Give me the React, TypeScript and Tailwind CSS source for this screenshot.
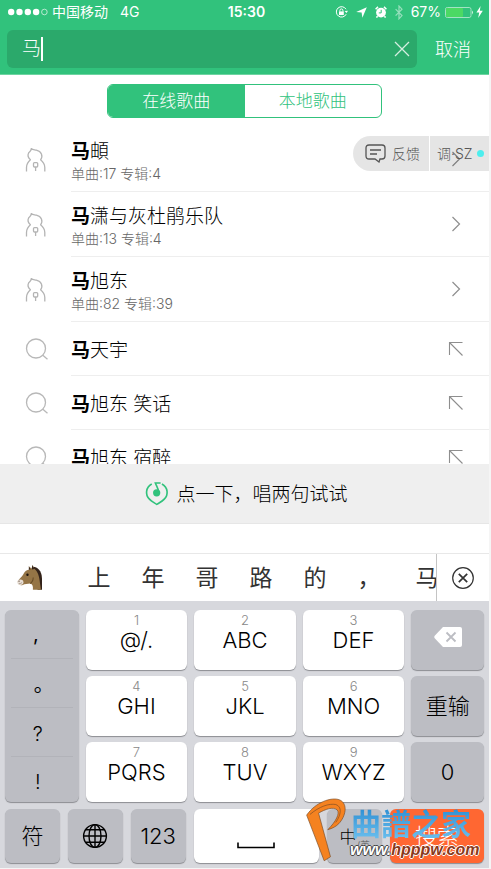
import React from "react";

const artists = [
  { rest: "頔", songs: 17, albums: 4 },
  { rest: "潇与灰杜鹃乐队", songs: 13, albums: 4 },
  { rest: "旭东", songs: 82, albums: 39 },
];

const suggestions = ["天宇", "旭东 笑话", "旭东 宿醉"];

const candidates = ["上", "年", "哥", "路", "的", "，", "马"];

const whiteKey =
  "flex flex-col items-center rounded-md bg-white pt-1 text-black shadow-[0_1px_1px_#8c8d92]";
const greyKey =
  "flex items-center justify-center rounded-md bg-[#bcbdc3] text-[22px] text-black shadow-[0_1px_1px_#8c8d92]";

function PersonIcon() {
  return (
    <svg width="22" height="26" viewBox="0 0 22 26" fill="none" stroke="#b4b4b4" strokeWidth="1.3" strokeLinejoin="round">
      <path d="M1.5 24.5V20.5C1.5 17.2 3 15 5.4 12.8C3.2 10.8 2.4 8.4 3.6 6C4.8 4.4 6.4 4 6.2 1.6C7.8 3 9.4 2.7 11.4 3.2C16.4 4.4 18.4 9 15.6 12.8C18.2 15 19.8 17.2 19.8 20.5V24.5" />
      <rect x="8.5" y="15.6" width="4.2" height="4.4" rx="1" />
      <path d="M10.6 20V24" />
    </svg>
  );
}

function SearchIcon() {
  return (
    <svg width="24" height="24" viewBox="0 0 24 24" fill="none" stroke="#b8b8b8" strokeWidth="1.3">
      <circle cx="11" cy="11.5" r="9.5" />
      <path d="M17.8 18.3L22.5 22.3" />
    </svg>
  );
}

function Chevron() {
  return (
    <svg width="10" height="16" viewBox="0 0 10 16" fill="none" stroke="#8e8e8e" strokeWidth="1.2">
      <path d="M1.5 1L8.5 8L1.5 15" />
    </svg>
  );
}

function FillArrow() {
  return (
    <svg width="16" height="16" viewBox="0 0 16 16" fill="none" stroke="#8e8e8e" strokeWidth="1.1">
      <path d="M1.5 14V1.5H14.5M1.5 1.5L14.5 14.5" />
    </svg>
  );
}

function StatusBar() {
  return (
    <div className="grid h-6 grid-cols-[1fr_auto_1fr] items-center px-2 text-[14px] leading-5">
      <div className="flex items-center">
        <svg width="40" height="8" viewBox="0 0 40 8" fill="#fff">
          <circle cx="3.2" cy="4" r="3.2" />
          <circle cx="11.5" cy="4" r="3.2" />
          <circle cx="19.8" cy="4" r="3.2" />
          <circle cx="28.1" cy="4" r="3.2" />
          <circle cx="36.4" cy="4" r="2.8" fill="none" stroke="#d5f3e4" strokeWidth=".8" />
        </svg>
        <span className="ml-1">中国移动</span>
        <span className="ml-3">4G</span>
      </div>
      <span className="pl-1 font-semibold">15:30</span>
      <div className="flex items-center justify-end">
        <svg width="13" height="12" viewBox="0 0 13 12" fill="none" stroke="#fff" strokeWidth="1">
          <path d="M11 3.2A5.2 5.2 0 1 0 11.2 8.2" />
          <path d="M9.6 5L11.5 7L13 4.8Z" fill="#fff" stroke="none" />
          <rect x="4" y="5.4" width="4.8" height="3.6" fill="#fff" stroke="none" />
          <path d="M4.9 5.5V4.4A1.5 1.5 0 0 1 7.9 4.4V5.5" />
        </svg>
        <svg className="ml-2" width="11" height="11" viewBox="0 0 11 11" fill="#fff">
          <path d="M10.8 .2L6.4 10.8L5.6 5.6L.2 5Z" />
        </svg>
        <svg className="ml-2" width="12" height="12" viewBox="0 0 12 12">
          <circle cx="6" cy="6.6" r="4.9" fill="#fff" />
          <path d="M.6 3.2L3 .9M11.4 3.2L9 .9M2.6 10.2L1.4 11.6M9.4 10.2L10.6 11.6" stroke="#fff" strokeWidth="1.5" />
          <path d="M6.2 3.8V6.9H3.8" stroke="#31c27c" fill="none" />
        </svg>
        <svg className="ml-2" width="8" height="15" viewBox="0 0 8 15" fill="none" stroke="#96dfbc" strokeWidth="1.2">
          <path d="M.6 4.2L7 10.6L4 13.8V1L7 4.2L.6 10.6" />
        </svg>
        <span className="ml-2">67%</span>
        <svg className="ml-1" width="29" height="11" viewBox="0 0 29 11">
          <rect x=".5" y=".5" width="25.5" height="10" rx="1.8" fill="none" stroke="#a2e3c4" />
          <rect x="1" y="1" width="17" height="9" rx="1" fill="#4bd964" />
          <path d="M27 3.6Q29 5.5 27 7.4Z" fill="#d5f3e4" />
        </svg>
        <svg className="-mr-0.5 ml-0.5" width="7" height="12" viewBox="0 0 7 12" fill="#fff">
          <path d="M4.6 0L.4 6.6H3.2L2.2 12L6.8 4.8H3.8Z" />
        </svg>
      </div>
    </div>
  );
}

function Header() {
  return (
    <header className="border-b border-[#6dd4a1] bg-[#31c27c] text-white">
      <StatusBar />
      <div className="flex items-center pt-1.5 pb-1.5 pl-[7px]">
        <div className="flex h-[38px] flex-1 items-center rounded-md bg-[#2ba96b] px-[15px]">
          <input
            aria-label="搜索歌曲"
            defaultValue="马"
            className="field-sizing-content bg-transparent text-[19px] font-light outline-none"
          />
          <span className="h-6 w-0.5 bg-white" />
          <button aria-label="清除" className="-mr-2 ml-auto">
            <svg width="16" height="16" viewBox="0 0 16 16" stroke="#d5eee1" strokeWidth="1.3">
              <path d="M1 1L15 15M15 1L1 15" />
            </svg>
          </button>
        </div>
        <button className="w-[72px] text-[18px] font-light">取消</button>
      </div>
    </header>
  );
}

function SongList() {
  return (
    <section className="relative h-[337px] overflow-hidden">
      <ul>
        {artists.map((a) => (
          <li key={a.rest} className="flex h-[65px] items-stretch">
            <div className="flex w-[71px] items-center pl-[25px]">
              <PersonIcon />
            </div>
            <div className="flex flex-1 items-center justify-between border-b border-[#eeeeee] pr-7">
              <div className="pt-1.5">
                <p className="text-[19px] leading-6 font-light text-black">
                  <b className="font-bold">马</b>
                  {a.rest}
                </p>
                <p className="text-[14px] leading-5 font-light text-[#666666]">
                  单曲:{a.songs} 专辑:{a.albums}
                </p>
              </div>
              <Chevron />
            </div>
          </li>
        ))}
        {suggestions.map((s) => (
          <li key={s} className="flex h-[54px] items-stretch">
            <div className="flex w-[71px] items-center pl-[25px]">
              <SearchIcon />
            </div>
            <div className="flex flex-1 items-center justify-between border-b border-[#eeeeee] pr-[25px]">
              <p className="pt-1 text-[19px] leading-6 font-light text-black">
                <b className="font-bold">马</b>
                {s}
              </p>
              <FillArrow />
            </div>
          </li>
        ))}
      </ul>
      <div className="absolute top-[9px] right-0 flex h-[35px] items-center rounded-l-full bg-black/10 text-[14px] text-[#555555]">
        <button className="flex h-full w-[77px] items-center gap-1.5 border-r border-white pl-3 font-light">
          <svg width="21" height="19" viewBox="0 0 21 19" fill="none" stroke="#555" strokeWidth="1.3">
            <path d="M4 1H17Q20 1 20 4V12Q20 15 17 15H15L14 18L10 15H4Q1 15 1 12V4Q1 1 4 1Z" />
            <path d="M5 6H16M5 10H12" />
          </svg>
          <span className="whitespace-nowrap">反馈</span>
        </button>
        <button className="flex h-full w-[59px] items-center pl-[7px] font-light whitespace-nowrap">
          调·SZ
          <span className="ml-1 size-[7px] shrink-0 rounded-full bg-[#4deeee]" />
        </button>
      </div>
    </section>
  );
}

function Horse() {
  return (
    <svg width="27" height="27" viewBox="48 28 80 80">
      <path d="M98 36C112 36 124 48 125 70L125 104H112Z" fill="#33231a" />
      <path d="M88 44L86 35L94 41L97 31L102 42C112 50 117 62 119 84L122 104H98C99 94 97 88 90 86C82 88 74 87 68 90C60 93 54 88 53 80C55 74 66 66 71 56C74 49 80 45 88 44Z" fill="#957546" />
      <path d="M90 86C96 82 99 76 99 68" fill="none" stroke="#674c27" strokeWidth="3" />
      <path d="M86 35L91 44L86 45ZM96 31L102 43L95 44Z" fill="#33231a" />
      <ellipse cx="61" cy="82" rx="9" ry="8" fill="#e8dfd6" />
      <circle cx="57" cy="79" r="1.8" fill="#5b4636" />
      <path d="M56 86Q62 87 66 83" fill="none" stroke="#7b6554" strokeWidth="1.5" />
      <circle cx="82" cy="60" r="3.5" fill="#1c130c" />
    </svg>
  );
}

function CandidateBar() {
  return (
    <div className="flex h-12 items-stretch border-t border-[#e8e8e8] bg-white text-[#333333]">
      <div className="flex min-w-0 flex-1 items-center overflow-hidden border-r border-[#c4c4c4]">
        <button aria-label="马表情" className="flex w-[72px] shrink-0 pl-4">
          <Horse />
        </button>
        {candidates.map((c) => (
          <button key={c} className="w-[54px] shrink-0 pt-0.5 text-center text-[23px] last:pl-2">
            {c}
          </button>
        ))}
      </div>
      <button aria-label="关闭候选" className="flex w-[52px] items-center justify-center">
        <svg width="24" height="24" viewBox="0 0 24 24" fill="none" stroke="#333">
          <circle cx="12" cy="12" r="10.3" strokeWidth="1.2" />
          <path d="M7.8 7.8L16.2 16.2M16.2 7.8L7.8 16.2" strokeWidth="1.7" />
        </svg>
      </button>
    </div>
  );
}

function LetterKey({ digit, label }: { digit: number; label: string }) {
  return (
    <button className={whiteKey}>
      <span className="text-[13px] leading-3 font-light text-[#888888]">{digit}</span>
      <span className="text-[22px] leading-7 font-light">{label}</span>
    </button>
  );
}

function Watermark() {
  return (
    <div className="pointer-events-none absolute right-0 bottom-0 flex items-end">
      <svg width="43" height="65" viewBox="45 50 130 195" className="mb-1.5">
        <path
          d="M50 104C76 66 124 48 150 58C176 70 168 108 147 130C138 139 128 144 114 148C138 124 152 98 142 88C130 78 106 86 86 98L122 230L103 242Z"
          fill="#f58220"
          stroke="#7a4a24"
          strokeWidth="2"
          strokeLinejoin="round"
        />
        <path d="M60 102C88 78 118 68 138 72C158 78 154 104 138 126" fill="none" stroke="#7a4a24" strokeWidth="2" />
      </svg>
      <div className="w-[141px]">
        <p className="bg-linear-to-b from-[#2b8fd3] to-[#6cc0ee] bg-clip-text pl-[3px] text-[30px] leading-8 font-bold text-transparent">
          曲譜之家
        </p>
        <p className="pb-2 pl-0.5 font-['Liberation_Sans',sans-serif] text-[16px] leading-5 font-bold text-[#8a3a1c] italic [text-shadow:1px_0_#fff,-1px_0_#fff,0_1px_#fff,0_-1px_#fff]">
          <span className="text-white [text-shadow:1px_0_#444,-1px_0_#444,0_1px_#444,0_-1px_#444]">www.</span>
          hpppw.com
        </p>
      </div>
    </div>
  );
}

function Keyboard() {
  return (
    <section className="relative bg-[#d7d8dd] px-[5px] pt-[9px] pb-[5px]">
      <div className="grid auto-rows-[60px] grid-cols-[74fr_102fr_102fr_102fr_73fr] gap-x-[7px] gap-y-1.5">
        <div className="row-span-3 flex flex-col divide-y divide-[#b2b3b9] rounded-md bg-[#bcbdc3] px-1.5 text-[20px] shadow-[0_1px_1px_#8c8d92]">
          <button className="h-[49px] shrink-0 pr-3">,</button>
          <button className="h-[49px] shrink-0 pt-1 pl-1">。</button>
          <button className="h-[49px] shrink-0 pt-1 pr-2 font-light">?</button>
          <button className="flex-1 pt-1 pr-2 font-light">!</button>
        </div>
        <LetterKey digit={1} label="@/." />
        <LetterKey digit={2} label="ABC" />
        <LetterKey digit={3} label="DEF" />
        <button aria-label="删除" className={`${greyKey} pb-1.5`}>
          <svg width="28" height="20" viewBox="0 0 28 20">
            <path d="M9 0H26Q28 0 28 2V18Q28 20 26 20H9L.5 11Q0 10 .5 9Z" fill="#fff" />
            <path d="M12.5 5.5L21.5 14.5M21.5 5.5L12.5 14.5" stroke="#bcbdc3" strokeWidth="1.8" />
          </svg>
        </button>
        <LetterKey digit={4} label="GHI" />
        <LetterKey digit={5} label="JKL" />
        <LetterKey digit={6} label="MNO" />
        <button className={`${greyKey} font-light`}>重输</button>
        <LetterKey digit={7} label="PQRS" />
        <LetterKey digit={8} label="TUV" />
        <LetterKey digit={9} label="WXYZ" />
        <button className={`${greyKey} font-light`}>0</button>
      </div>
      <div className="mt-[7px] grid h-[54px] grid-cols-[55fr_55fr_55fr_126fr_55fr_94fr] gap-x-2">
        <button className={`${greyKey} font-light`}>符</button>
        <button aria-label="切换输入法" className={greyKey}>
          <svg width="26" height="26" viewBox="0 0 26 26" fill="none" stroke="#000" strokeWidth="1.4">
            <circle cx="13" cy="13" r="11.4" />
            <ellipse cx="13" cy="13" rx="6" ry="11.4" />
            <path d="M13 1.6V24.4M1.6 13H24.4M3.8 6.8H22.2M3.8 19.2H22.2" />
          </svg>
        </button>
        <button className={`${greyKey} font-light`}>123</button>
        <button
          aria-label="空格"
          className="flex items-end justify-center rounded-md bg-white pb-3.5 shadow-[0_1px_1px_#8c8d92]"
        >
          <svg width="38" height="7" viewBox="0 0 38 7" fill="none" stroke="#000" strokeWidth="1.6">
            <path d="M1 .5V5.5H37V.5" />
          </svg>
        </button>
        <button className={`${greyKey} font-light`}>
          <span className="pt-1 text-[17px]">中</span>
          <span className="self-end pb-2.5 text-[10px] text-[#555555]">/英</span>
        </button>
        <button className="rounded-md bg-[#ff6732] text-[22px] font-light text-white shadow-[0_1px_1px_#8c8d92]">
          搜索
        </button>
      </div>
      <Watermark />
    </section>
  );
}

export default function App() {
  return (
    <div className="min-h-screen bg-[#f5f5f5] pr-0.5 font-['Inter','Noto_Sans_CJK_SC',sans-serif]">
      <div className="bg-white">
        <Header />
        <div className="flex justify-center px-[107px] pt-[9px] pb-[9px]">
          <div className="flex h-[34px] flex-1 overflow-hidden rounded-md border border-[#31c27c] text-[17px] font-light">
            <button className="flex-1 bg-[#31c27c] pt-0.5 text-white">在线歌曲</button>
            <button className="flex-1 pt-0.5 text-[#31c27c]">本地歌曲</button>
          </div>
        </div>
        <SongList />
        <button className="mb-[29px] flex h-[60px] w-full items-center justify-center gap-[7px] border-b border-[#e6e6e6] bg-[#efefef] pl-1 text-[19px] font-light text-black">
          <svg width="24" height="25" viewBox="48 122 72 76" fill="none" stroke="#31c27c" strokeWidth="5">
            <path d="M68 131C50 141 47 163 61 177C67 184 76 188 83 193C91 188 100 184 106 177C120 163 117 141 99 131" />
            <path d="M95 128H79C82 137 88 143 89 156" />
            <circle cx="83" cy="158" r="11" fill="#31c27c" stroke="none" />
          </svg>
          <span className="pt-1">点一下，唱两句试试</span>
        </button>
        <CandidateBar />
        <Keyboard />
      </div>
    </div>
  );
}
